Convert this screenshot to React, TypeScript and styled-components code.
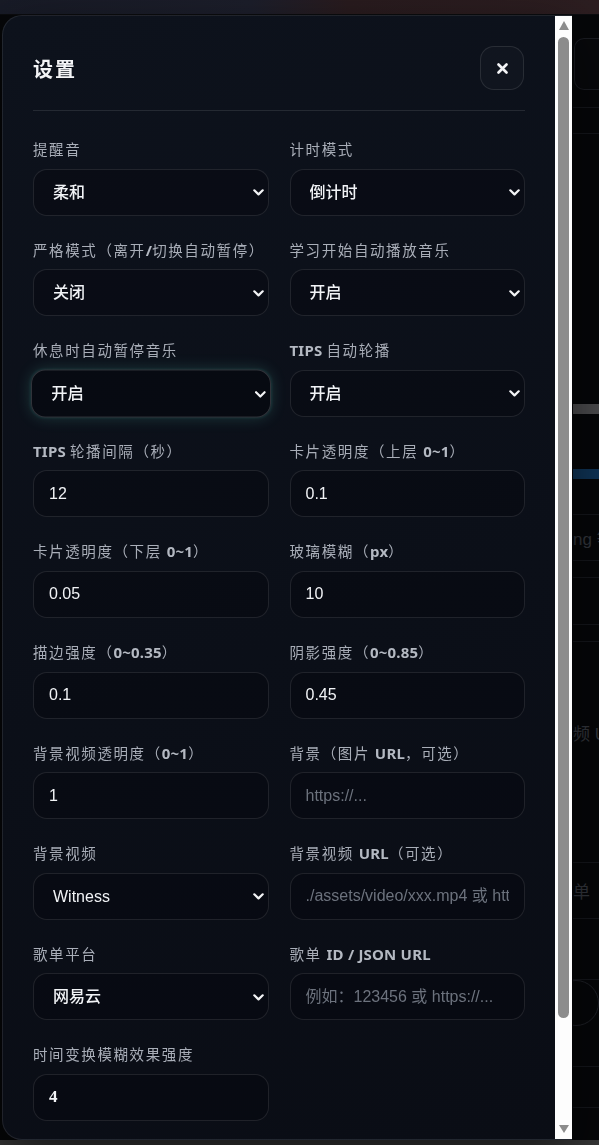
import React from "react";
import styled, { createGlobalStyle, css } from "styled-components";

const GlobalStyle = createGlobalStyle`
    html, body {
        margin: 0;
        padding: 0;
        height: 100%;
        background: #060709;
    }
    body {
        font-family: "Liberation Sans", "Noto Sans CJK SC", sans-serif;
        overflow: hidden;
    }
    #root {
        height: 100%;
    }
`;

// ---- page behind the dialog ----
const Page = styled.div`
    height: 100vh;
    display: flex;
    flex-direction: column;
    background: #060709;
`;

const TopBar = styled.div`
    height: 14px;
    flex-shrink: 0;
    background: linear-gradient(90deg, #181b27 0%, #1d1f2c 42%, #2a1c1f 58%, #2d1e21 100%);
    border-bottom: 1px solid #0b0c0f;
`;

const Body = styled.div`
    flex: 1;
    display: flex;
    min-height: 0;
`;

const Gutter = styled.div`
    width: 573px;
    flex-shrink: 0;
`;

const Side = styled.aside`
    flex: 1;
    display: flex;
    flex-direction: column;
    padding-top: 23px;
    overflow: hidden;
`;

const SideCard = styled.div`
    height: 50px;
    margin-left: 1px;
    border: 1px solid #1b1d23;
    border-right: none;
    border-radius: 10px 0 0 10px;
    background: #08090c;
`;

const SideRow = styled.div<{ $h: number; $line?: boolean }>`
    height: ${(p) => p.$h}px;
    flex-shrink: 0;
    border-bottom: ${(p) => (p.$line ? "1px solid #15171c" : "none")};
    display: flex;
    align-items: center;
    color: #34373e;
    font-size: 17px;
    white-space: nowrap;
    overflow: hidden;
`;

const SideBar = styled.div<{ $color: string }>`
    height: 10px;
    flex-shrink: 0;
    background: ${(p) => p.$color};
`;

const SideCircle = styled.div`
    width: 44px;
    height: 44px;
    margin-left: -20px;
    flex-shrink: 0;
    border-radius: 50%;
    border: 1px solid #1f2127;
`;

const BottomBar = styled.div`
    height: 5px;
    flex-shrink: 0;
    background: #383838;
`;

// ---- dialog ----
const Modal = styled.div`
    position: fixed;
    top: 15px;
    left: 2px;
    width: 570px;
    height: 1125px;
    box-sizing: border-box;
    display: flex;
    border: 1px solid rgba(255, 255, 255, 0.09);
    border-right: none;
    border-radius: 20px 0 0 20px;
    background: linear-gradient(160deg, #0d121c 0%, #0b0f18 55%, #0a0d15 100%);
    box-shadow: 0 20px 60px rgba(0, 0, 0, 0.6);
    overflow: hidden;
    color: #f1f3f6;
`;

const ScrollArea = styled.div`
    flex: 1;
    min-width: 0;
    padding: 30px;
    overflow-y: auto;
    scrollbar-width: none;
    &::-webkit-scrollbar {
        display: none;
    }
`;

// classic scrollbar drawn beside the scroll area
const ScrollBar = styled.div`
    width: 17px;
    flex-shrink: 0;
    background: #fdfdfd;
    display: flex;
    flex-direction: column;
`;

const ArrowButton = styled.div<{ $down?: boolean }>`
    height: ${(p) => (p.$down ? "18px" : "21px")};
    flex-shrink: 0;
    display: flex;
    justify-content: center;
    align-items: flex-start;
    padding-top: ${(p) => (p.$down ? "4px" : "5px")};
    box-sizing: border-box;
    &::before {
        content: "";
        width: 0;
        height: 0;
        border-left: 5.5px solid transparent;
        border-right: 5.5px solid transparent;
        ${(p) =>
            p.$down
                ? css`
                      border-top: 8px solid #8c8c8c;
                  `
                : css`
                      border-bottom: 9px solid #8c8c8c;
                  `}
    }
`;

const Track = styled.div`
    flex: 1;
    padding: 0 3px;
    display: flex;
    flex-direction: column;
`;

const Thumb = styled.div<{ $size: number }>`
    height: ${(p) => p.$size * 100}%;
    border-radius: 5.5px;
    background: #8c8c8c;
`;

const Header = styled.div`
    height: 44px;
    padding-bottom: 20px;
    border-bottom: 1px solid rgba(255, 255, 255, 0.1);
    display: flex;
    align-items: center;
    justify-content: space-between;
`;

const Title = styled.h2`
    margin: 0;
    font-family: "Noto Sans CJK SC", sans-serif;
    font-size: 20px;
    font-weight: 700;
    letter-spacing: 2px;
    color: #f3f4f6;
`;

const CloseButton = styled.button`
    width: 44px;
    height: 44px;
    border-radius: 14px;
    border: 1px solid rgba(255, 255, 255, 0.1);
    background: rgba(255, 255, 255, 0.02);
    display: flex;
    align-items: center;
    justify-content: center;
    padding: 0;
    margin-right: 1px;
    cursor: pointer;
`;

const Grid = styled.div`
    margin-top: 28px;
    display: grid;
    grid-template-columns: 1fr 1fr;
    column-gap: 21px;
    row-gap: 24px;
`;

const Cell = styled.label`
    display: flex;
    flex-direction: column;
    gap: 10px;
    min-width: 0;
`;

const Label = styled.span`
    display: block;
    height: 19.6px;
    font-family: "Noto Sans CJK SC", sans-serif;
    font-size: 14.5px;
    line-height: 19.6px;
    letter-spacing: 1.6px;
    color: #a9aeb8;
    white-space: nowrap;
`;

const Latin = styled.span`
    font-family: "Noto Sans", sans-serif;
    font-weight: 700;
    font-size: 15px;
    line-height: 1;
    letter-spacing: 0.2px;
    color: #b4b9c2;
`;

const fieldBase = css`
    width: 100%;
    height: 47px;
    box-sizing: border-box;
    border-radius: 14px;
    border: 1px solid rgba(255, 255, 255, 0.1);
    background: rgba(2, 4, 9, 0.3);
    color: #f1f3f6;
    font-size: 16px;
    outline: none;
    margin: 0;
`;

const TextInput = styled.input<{ $serif?: boolean }>`
    ${fieldBase};
    padding: 0 15px;
    font-family: ${(p) => (p.$serif ? '"Liberation Serif", serif' : '"Liberation Sans", "Noto Sans CJK SC", sans-serif')};
    font-weight: ${(p) => (p.$serif ? 700 : 400)};
    font-size: ${(p) => (p.$serif ? "17px" : "16px")};
    &::placeholder {
        color: #6c727d;
    }
`;

const SelectWrap = styled.div<{ $focused?: boolean }>`
    position: relative;
    border-radius: 14px;
    ${(p) =>
        p.$focused &&
        css`
            transform: scale(1.017);
            box-shadow: 0 0 16px rgba(96, 214, 196, 0.2), 0 0 3px rgba(96, 214, 196, 0.12);
        `}
`;

const Select = styled.select<{ $focused?: boolean }>`
    ${fieldBase};
    appearance: none;
    -webkit-appearance: none;
    padding: 0 30px 0 19px;
    font-family: "Liberation Sans", "Noto Sans CJK SC", sans-serif;
    font-weight: 500;
    cursor: pointer;
    border-color: ${(p) => (p.$focused ? "rgba(255,255,255,0.17)" : "rgba(255,255,255,0.1)")};
    background: ${(p) => (p.$focused ? "rgba(2,4,9,0.5)" : "rgba(2,4,9,0.3)")};
`;

const Chevron = styled.svg`
    position: absolute;
    right: 5px;
    top: 50%;
    margin-top: -3px;
    pointer-events: none;
`;

const Footer = styled.div`
    margin-top: 20px;
    padding-top: 14px;
    border-top: 1px solid rgba(255, 255, 255, 0.1);
    display: flex;
    flex-direction: column;
    gap: 10px;
`;

const Hint = styled.p`
    margin: 0;
    font-family: "Noto Sans CJK SC", sans-serif;
    font-size: 13px;
    line-height: 20px;
    color: #7d838e;
`;

const Actions = styled.div`
    display: flex;
    justify-content: flex-end;
    gap: 12px;
`;

const ActionButton = styled.button<{ $primary?: boolean }>`
    height: 44px;
    padding: 0 22px;
    border-radius: 14px;
    border: 1px solid rgba(255, 255, 255, 0.12);
    background: ${(p) => (p.$primary ? "#2dd4bf" : "transparent")};
    color: ${(p) => (p.$primary ? "#062320" : "#e5e7eb")};
    font-family: "Noto Sans CJK SC", sans-serif;
    font-size: 15px;
`;

type FieldDef =
    | { label: string; kind: "select"; value: string; options: string[]; focused?: boolean }
    | { label: string; kind: "input"; value?: string; placeholder?: string; serif?: boolean };

const onOff = ["开启", "关闭"];

const fields: FieldDef[] = [
    { label: "提醒音", kind: "select", value: "柔和", options: ["柔和", "清脆", "静音"] },
    { label: "计时模式", kind: "select", value: "倒计时", options: ["倒计时", "正计时"] },
    { label: "严格模式（离开/切换自动暂停）", kind: "select", value: "关闭", options: onOff },
    { label: "学习开始自动播放音乐", kind: "select", value: "开启", options: onOff },
    { label: "休息时自动暂停音乐", kind: "select", value: "开启", options: onOff, focused: true },
    { label: "TIPS 自动轮播", kind: "select", value: "开启", options: onOff },
    { label: "TIPS 轮播间隔（秒）", kind: "input", value: "12" },
    { label: "卡片透明度（上层 0~1）", kind: "input", value: "0.1" },
    { label: "卡片透明度（下层 0~1）", kind: "input", value: "0.05" },
    { label: "玻璃模糊（px）", kind: "input", value: "10" },
    { label: "描边强度（0~0.35）", kind: "input", value: "0.1" },
    { label: "阴影强度（0~0.85）", kind: "input", value: "0.45" },
    { label: "背景视频透明度（0~1）", kind: "input", value: "1" },
    { label: "背景（图片 URL，可选）", kind: "input", placeholder: "https://..." },
    { label: "背景视频", kind: "select", value: "Witness", options: ["Witness", "Rain", "无"] },
    { label: "背景视频 URL（可选）", kind: "input", placeholder: "./assets/video/xxx.mp4 或 https://..." },
    { label: "歌单平台", kind: "select", value: "网易云", options: ["网易云", "QQ音乐", "本地 JSON"] },
    { label: "歌单 ID / JSON URL", kind: "input", placeholder: "例如：123456 或 https://..." },
    { label: "时间变换模糊效果强度", kind: "input", value: "4", serif: true },
];

// latin runs in the labels are drawn heavier than the chinese text
function LabelText({ text }: { text: string }) {
    const parts = text.split(/([\x21-\x7E][\x20-\x7E]*)/).filter(Boolean);
    return (
        <Label>
            {parts.map((p, i) => (/^[\x20-\x7E]+$/.test(p) ? <Latin key={i}>{p}</Latin> : <React.Fragment key={i}>{p}</React.Fragment>))}
        </Label>
    );
}

function Field({ def }: { def: FieldDef }) {
    return (
        <Cell>
            <LabelText text={def.label} />
            {def.kind === "select" ? (
                <SelectWrap $focused={def.focused}>
                    <Select $focused={def.focused} defaultValue={def.value}>
                        {def.options.map((o) => (
                            <option key={o}>{o}</option>
                        ))}
                    </Select>
                    <Chevron width="11" height="7" viewBox="0 0 11 7">
                        <polyline
                            points="1.3,1.3 5.5,5.4 9.7,1.3"
                            fill="none"
                            stroke="#f3f4f6"
                            strokeWidth="2.2"
                            strokeLinecap="round"
                            strokeLinejoin="round"
                        />
                    </Chevron>
                </SelectWrap>
            ) : (
                <TextInput $serif={def.serif} defaultValue={def.value} placeholder={def.placeholder} />
            )}
        </Cell>
    );
}

export default function App() {
    return (
        <>
            <GlobalStyle />
            <Page>
                <TopBar />
                <Body>
                    <Gutter />
                    <Side>
                        <SideCard />
                        <SideRow $h={17} $line />
                        <SideRow $h={25} $line />
                        <SideRow $h={270} />
                        <SideBar $color="#4d4d4f" />
                        <SideRow $h={55} />
                        <SideBar $color="#0f3558" />
                        <SideRow $h={35} $line />
                        <SideRow $h={45} $line>ng 等</SideRow>
                        <SideRow $h={16} $line />
                        <SideRow $h={46} $line />
                        <SideRow $h={16} $line />
                        <SideRow $h={180}>频 U</SideRow>
                        <SideRow $h={40} $line />
                        <SideRow $h={55} $line>单</SideRow>
                        <SideRow $h={60} $line />
                        <SideCircle />
                        <SideRow $h={40} $line />
                        <SideRow $h={40} $line />
                    </Side>
                </Body>
                <BottomBar />
            </Page>

            <Modal role="dialog" aria-label="设置">
                <ScrollArea>
                    <Header>
                        <Title>设置</Title>
                        <CloseButton aria-label="关闭">
                            <svg width="11" height="11" viewBox="0 0 11 11">
                                <path d="M1.5 1.5 L9.5 9.5 M9.5 1.5 L1.5 9.5" stroke="#f3f4f6" strokeWidth="2.6" strokeLinecap="round" />
                            </svg>
                        </CloseButton>
                    </Header>
                    <Grid>
                        {fields.map((f) => (
                            <Field key={f.label} def={f} />
                        ))}
                    </Grid>
                    <Footer>
                        <Hint>设置会自动保存到本地浏览器。</Hint>
                        <Actions>
                            <ActionButton>恢复默认</ActionButton>
                            <ActionButton $primary>完成</ActionButton>
                        </Actions>
                    </Footer>
                </ScrollArea>
                <ScrollBar aria-hidden>
                    <ArrowButton />
                    <Track>
                        <Thumb $size={0.905} />
                    </Track>
                    <ArrowButton $down />
                </ScrollBar>
            </Modal>
        </>
    );
}
